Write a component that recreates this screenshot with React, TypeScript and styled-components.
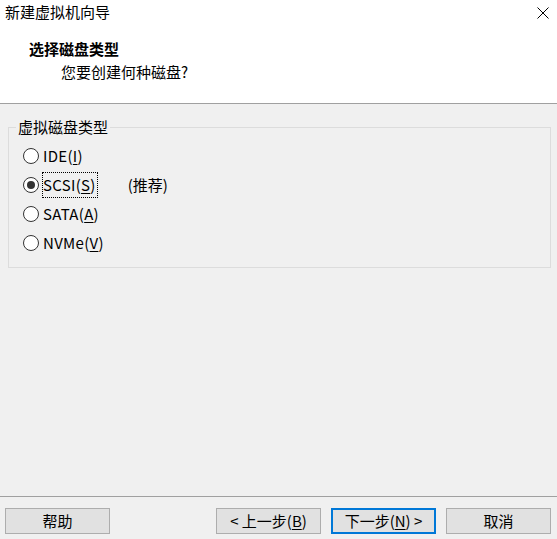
import React from "react";
import styled, { createGlobalStyle } from "styled-components";

const Global = createGlobalStyle`
  html, body { margin: 0; padding: 0; background: #f0f0f0; }
  body { font-family: "Noto Sans CJK SC", "Noto Sans", sans-serif; font-size: 15px; color: #000; }
`;

const Window = styled.div`
  width: 557px;
  height: 539px;
  display: flex;
  flex-direction: column;
  background: #f0f0f0;
  overflow: hidden;
`;

const Top = styled.div`
  background: #fff;
  height: 103px;
  border-bottom: 1px solid #a0a0a0;
  display: flex;
  flex-direction: column;
  flex-shrink: 0;
`;

const TitleBar = styled.div`
  height: 25px;
  display: flex;
  align-items: center;
  justify-content: space-between;
  padding: 0 8px 0 5px;
`;

const TitleText = styled.span`
  font-size: 15px;
  line-height: 20px;
  margin-top: -1px;
`;

const CloseIcon = styled.svg`
  width: 12px;
  height: 12px;
  display: block;
  margin-top: 1px;
`;

const Header = styled.div`
  padding: 13px 0 0 29px;
  display: flex;
  flex-direction: column;
`;

const Heading = styled.div`
  font-weight: bold;
  font-size: 15px;
  line-height: 22px;
`;

const Sub = styled.div`
  font-size: 15px;
  line-height: 22px;
  margin: 1px 0 0 32px;
`;

const Body = styled.div`
  flex: 1;
  padding: 13px 6px 0 8px;
`;

const Group = styled.fieldset`
  margin: 0;
  border: 1px solid #dcdcdc;
  padding: 0 0 10px 7px;
  min-width: 0;
`;

const Legend = styled.legend`
  padding: 0 2px;
  font-size: 15px;
  line-height: 20px;
`;

const List = styled.div`
  display: flex;
  flex-direction: column;
  padding: 4px 0 0 7px;
`;

const Row = styled.label`
  display: flex;
  align-items: center;
  height: 29px;
`;

const Circle = styled.span<{ $on?: boolean }>`
  width: 14px;
  height: 14px;
  border: 1px solid #333;
  border-radius: 50%;
  background: #fff;
  display: flex;
  align-items: center;
  justify-content: center;
  flex-shrink: 0;
  &::after {
    content: "";
    width: 8px;
    height: 8px;
    border-radius: 50%;
    background: ${(p) => (p.$on ? "#333" : "transparent")};
  }
`;

const Label = styled.span<{ $focus?: boolean }>`
  margin-left: 4px;
  padding: 1px 1px 1px 0;
  line-height: 22px;
  letter-spacing: 0.3px;
  outline: ${(p) => (p.$focus ? "1px dotted #000" : "none")};
  outline-offset: 0;
`;

const Note = styled.span`
  margin-left: 31px;
  line-height: 22px;
`;

const Key = styled.u`
  text-underline-offset: 2px;
`;

const Footer = styled.div`
  flex-shrink: 0;
  border-top: 1px solid #a0a0a0;
  height: 43px;
  display: flex;
  align-items: flex-start;
  padding: 11px 6px 0 5px;
  box-sizing: border-box;
`;

const Spacer = styled.div`
  flex: 1;
`;

const Btn = styled.button<{ $primary?: boolean; $gap?: number }>`
  width: 105px;
  height: 26px;
  margin-left: ${(p) => p.$gap ?? 0}px;
  box-sizing: border-box;
  background: #e1e1e1;
  border: ${(p) => (p.$primary ? "2px solid #0078d7" : "1px solid #adadad")};
  font-family: "Noto Sans CJK SC", "Noto Sans", sans-serif;
  font-size: 15px;
  line-height: 20px;
  color: #000;
  padding: 0;
  display: flex;
  align-items: center;
  justify-content: center;
`;

export default function App() {
  return (
    <Window>
      <Global />
      <Top>
        <TitleBar>
          <TitleText>新建虚拟机向导</TitleText>
          <CloseIcon viewBox="0 0 12 12">
            <path d="M0.5 0.5 L11.5 11.5 M11.5 0.5 L0.5 11.5" stroke="#000" strokeWidth="1" fill="none" />
          </CloseIcon>
        </TitleBar>
        <Header>
          <Heading>选择磁盘类型</Heading>
          <Sub>您要创建何种磁盘?</Sub>
        </Header>
      </Top>
      <Body>
        <Group>
          <Legend>虚拟磁盘类型</Legend>
          <List>
            <Row>
              <Circle />
              <Label>IDE(<Key>I</Key>)</Label>
            </Row>
            <Row>
              <Circle $on />
              <Label $focus>SCSI(<Key>S</Key>)</Label>
              <Note>(推荐)</Note>
            </Row>
            <Row>
              <Circle />
              <Label>SATA(<Key>A</Key>)</Label>
            </Row>
            <Row>
              <Circle />
              <Label>NVMe(<Key>V</Key>)</Label>
            </Row>
          </List>
        </Group>
      </Body>
      <Footer>
        <Btn>帮助</Btn>
        <Spacer />
        <Btn>&lt; 上一步(<Key>B</Key>)</Btn>
        <Btn $primary $gap={10}>下一步(<Key>N</Key>) &gt;</Btn>
        <Btn $gap={10}>取消</Btn>
      </Footer>
    </Window>
  );
}
